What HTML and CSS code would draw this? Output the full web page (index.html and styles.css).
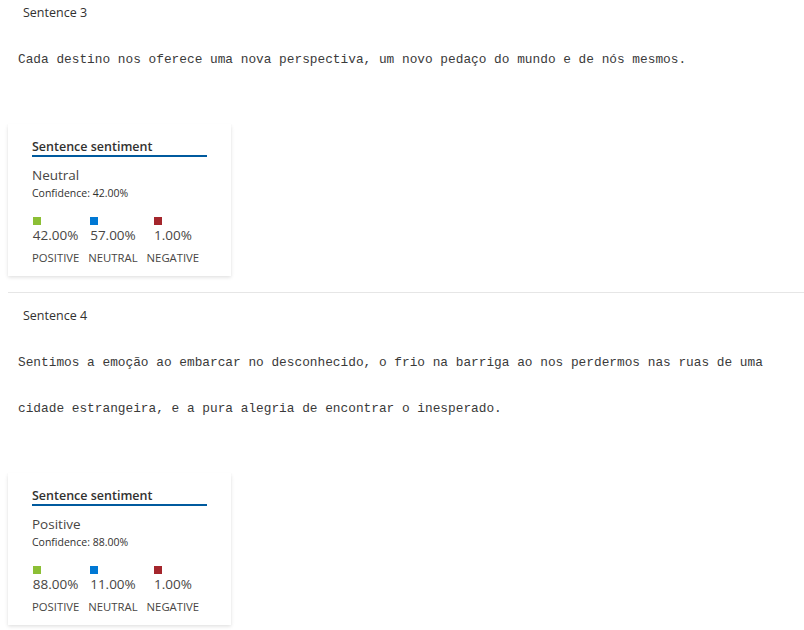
FILE: index.html
```html
<!DOCTYPE html>
<html>
<head>
<meta charset="utf-8">
<link rel="stylesheet" href="styles.css">
</head>
<body>
<section class="section first">
  <div class="title">Sentence 3</div>
  <p class="text">Cada destino nos oferece uma nova perspectiva, um novo pedaço do mundo e de nós mesmos.</p>
  <div class="card">
    <div class="card-head">Sentence sentiment</div>
    <div class="label">Neutral</div>
    <div class="confidence">Confidence: 42.00%</div>
    <div class="scores">
      <div class="col">
        <div class="val"><span class="sq pos"></span>42.00%</div>
        <div class="name">POSITIVE</div>
      </div>
      <div class="col">
        <div class="val"><span class="sq neu"></span>57.00%</div>
        <div class="name">NEUTRAL</div>
      </div>
      <div class="col">
        <div class="val"><span class="sq neg"></span>1.00%</div>
        <div class="name">NEGATIVE</div>
      </div>
    </div>
  </div>
</section>
<section class="section">
  <div class="title">Sentence 4</div>
  <p class="text">Sentimos a emoção ao embarcar no desconhecido, o frio na barriga ao nos perdermos nas ruas de uma cidade estrangeira, e a pura alegria de encontrar o inesperado.</p>
  <div class="card">
    <div class="card-head">Sentence sentiment</div>
    <div class="label">Positive</div>
    <div class="confidence">Confidence: 88.00%</div>
    <div class="scores">
      <div class="col">
        <div class="val"><span class="sq pos"></span>88.00%</div>
        <div class="name">POSITIVE</div>
      </div>
      <div class="col">
        <div class="val"><span class="sq neu"></span>11.00%</div>
        <div class="name">NEUTRAL</div>
      </div>
      <div class="col">
        <div class="val"><span class="sq neg"></span>1.00%</div>
        <div class="name">NEGATIVE</div>
      </div>
    </div>
  </div>
</section>
</body>
</html>
```
FILE: styles.css
```css
html, body {
  margin: 0;
  padding: 0;
  background: #ffffff;
}
body {
  font-family: "Segoe UI", "Open Sans", "Noto Sans", sans-serif;
  color: #323130;
}
.section {
  margin-left: 8px;
  border-top: 1px solid #e6e6e6;
  padding-bottom: 16px;
}
.section.first {
  border-top: none;
}
.title {
  font-size: 12.5px;
  line-height: 20px;
  padding: 13px 0 0 15px;
  color: #323130;
}
.section.first .title {
  padding-top: 3px;
}
.text {
  margin: 14px 0 0 0;
  padding-left: 10px;
  padding-right: 8px;
  font-family: "Liberation Mono", "DejaVu Sans Mono", monospace;
  font-size: 12.8px;
  line-height: 46px;
  color: #3a3a3a;
}
.card {
  margin-top: 41px;
  width: 175px;
  padding: 13px 24px 10px 24px;
  background: #ffffff;
  box-shadow: 0 1.6px 3.6px rgba(0, 0, 0, 0.13), 0 0.3px 0.9px rgba(0, 0, 0, 0.11);
}
.card-head {
  padding-top: 2px;
  font-size: 12.5px;
  font-weight: 600;
  line-height: 16px;
  color: #323130;
  border-bottom: 2px solid #005a9e;
}
.label {
  margin-top: 8px;
  font-size: 13.5px;
  line-height: 20px;
  color: #484644;
}
.confidence {
  padding-top: 1px;
  font-size: 10.5px;
  line-height: 14px;
  color: #323130;
}
.scores {
  display: flex;
  gap: 9px;
  margin-top: 17px;
}
.col {
  display: flex;
  flex-direction: column;
  align-items: center;
}
.val {
  padding-top: 8px;
  font-size: 13.5px;
  line-height: 20px;
  color: #484644;
}
.sq {
  display: block;
  width: 8px;
  height: 8px;
  margin-top: -8px;
}
.pos { background: #8cbf35; }
.neu { background: #0078d4; }
.neg { background: #a4262c; }
.name {
  margin-top: 5px;
  font-size: 11.3px;
  line-height: 16px;
  color: #484644;
}
```
